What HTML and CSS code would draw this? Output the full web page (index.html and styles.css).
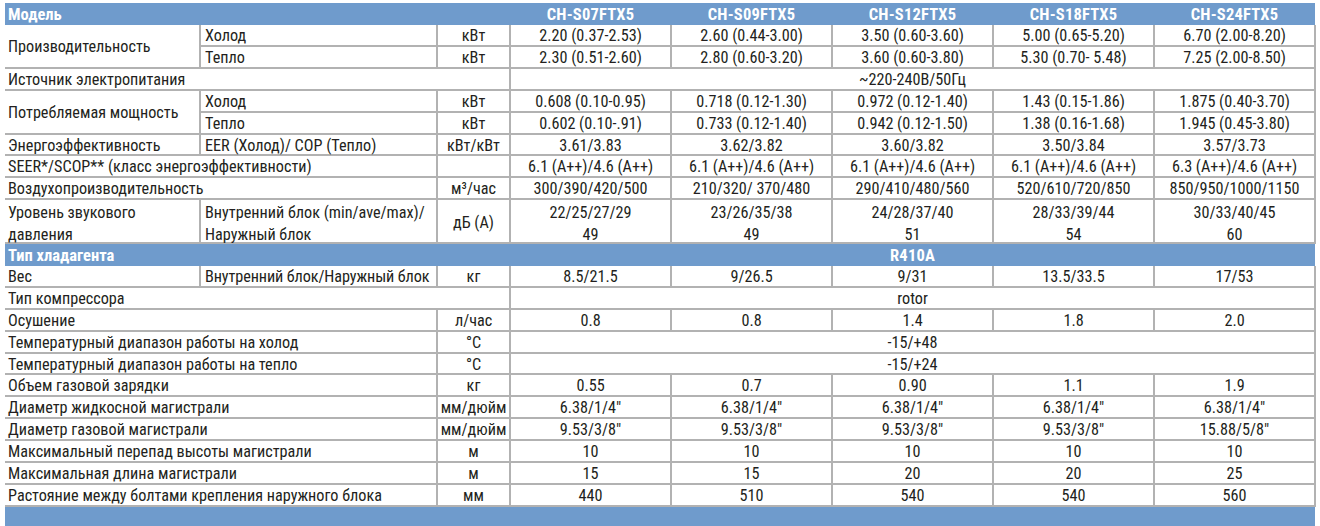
FILE: index.html
```html
<!DOCTYPE html>
<html lang="ru">
<head>
<meta charset="utf-8">
<title>Технические характеристики</title>
<link rel="stylesheet" href="styles.css">
</head>
<body>
<table class="spec">
  <colgroup>
    <col class="c-label"><col class="c-sub"><col class="c-unit">
    <col class="c-val"><col class="c-val"><col class="c-val"><col class="c-val"><col class="c-val">
  </colgroup>
  <tbody>
    <tr class="band">
      <td colspan="3" class="band-title">Модель</td>
      <td class="band-model">CH-S07FTX5</td>
      <td class="band-model">CH-S09FTX5</td>
      <td class="band-model">CH-S12FTX5</td>
      <td class="band-model">CH-S18FTX5</td>
      <td class="band-model">CH-S24FTX5</td>
    </tr>
    <tr>
      <td rowspan="2" class="lbl">Производительность</td>
      <td class="sub">Холод</td><td class="unit">кВт</td>
      <td class="v">2.20 (0.37-2.53)</td><td class="v">2.60 (0.44-3.00)</td><td class="v">3.50 (0.60-3.60)</td><td class="v">5.00 (0.65-5.20)</td><td class="v last">6.70 (2.00-8.20)</td>
    </tr>
    <tr>
      <td class="sub">Тепло</td><td class="unit">кВт</td>
      <td class="v">2.30 (0.51-2.60)</td><td class="v">2.80 (0.60-3.20)</td><td class="v">3.60 (0.60-3.80)</td><td class="v">5.30 (0.70- 5.48)</td><td class="v last">7.25 (2.00-8.50)</td>
    </tr>
    <tr>
      <td colspan="3" class="lbl">Источник электропитания</td>
      <td colspan="5" class="v last">~220-240В/50Гц</td>
    </tr>
    <tr>
      <td rowspan="2" class="lbl">Потребляемая мощность</td>
      <td class="sub">Холод</td><td class="unit">кВт</td>
      <td class="v">0.608 (0.10-0.95)</td><td class="v">0.718 (0.12-1.30)</td><td class="v">0.972 (0.12-1.40)</td><td class="v">1.43 (0.15-1.86)</td><td class="v last">1.875 (0.40-3.70)</td>
    </tr>
    <tr>
      <td class="sub">Тепло</td><td class="unit">кВт</td>
      <td class="v">0.602 (0.10-.91)</td><td class="v">0.733 (0.12-1.40)</td><td class="v">0.942 (0.12-1.50)</td><td class="v">1.38 (0.16-1.68)</td><td class="v last">1.945 (0.45-3.80)</td>
    </tr>
    <tr>
      <td class="lbl">Энергоэффективность</td>
      <td class="sub">EER (Холод)/ COP (Тепло)</td><td class="unit">кВт/кВт</td>
      <td class="v">3.61/3.83</td><td class="v">3.62/3.82</td><td class="v">3.60/3.82</td><td class="v">3.50/3.84</td><td class="v last">3.57/3.73</td>
    </tr>
    <tr>
      <td colspan="2" class="lbl">SEER*/SCOP** (класс энергоэффективности)</td>
      <td class="unit"></td>
      <td class="v">6.1 (A++)/4.6 (A++)</td><td class="v">6.1 (A++)/4.6 (A++)</td><td class="v">6.1 (A++)/4.6 (A++)</td><td class="v">6.1 (A++)/4.6 (A++)</td><td class="v last">6.3 (A++)/4.6 (A++)</td>
    </tr>
    <tr>
      <td colspan="2" class="lbl">Воздухопроизводительность</td>
      <td class="unit">м³/час</td>
      <td class="v">300/390/420/500</td><td class="v">210/320/ 370/480</td><td class="v">290/410/480/560</td><td class="v">520/610/720/850</td><td class="v last">850/950/1000/1150</td>
    </tr>
    <tr class="double">
      <td class="lbl"><div class="two">Уровень звукового<br>давления</div></td>
      <td class="sub"><div class="two">Внутренний блок (min/ave/max)/<br>Наружный блок</div></td>
      <td class="unit"><div class="two one">дБ (А)</div></td>
      <td class="v"><div class="two">22/25/27/29<br>49</div></td><td class="v"><div class="two">23/26/35/38<br>49</div></td><td class="v"><div class="two">24/28/37/40<br>51</div></td><td class="v"><div class="two">28/33/39/44<br>54</div></td><td class="v last"><div class="two">30/33/40/45<br>60</div></td>
    </tr>
    <tr class="band">
      <td colspan="3" class="band-title">Тип хладагента</td>
      <td colspan="5" class="band-model">R410A</td>
    </tr>
    <tr>
      <td class="lbl">Вес</td>
      <td class="sub tight">Внутренний блок/Наружный блок</td><td class="unit">кг</td>
      <td class="v">8.5/21.5</td><td class="v">9/26.5</td><td class="v">9/31</td><td class="v">13.5/33.5</td><td class="v last">17/53</td>
    </tr>
    <tr>
      <td colspan="3" class="lbl">Тип компрессора</td>
      <td colspan="5" class="v last">rotor</td>
    </tr>
    <tr>
      <td colspan="2" class="lbl">Осушение</td><td class="unit">л/час</td>
      <td class="v">0.8</td><td class="v">0.8</td><td class="v">1.4</td><td class="v">1.8</td><td class="v last">2.0</td>
    </tr>
    <tr>
      <td colspan="2" class="lbl">Температурный диапазон работы на холод</td><td class="unit">°C</td>
      <td colspan="5" class="v last">-15/+48</td>
    </tr>
    <tr>
      <td colspan="2" class="lbl">Температурный диапазон работы на тепло</td><td class="unit">°C</td>
      <td colspan="5" class="v last">-15/+24</td>
    </tr>
    <tr>
      <td colspan="2" class="lbl">Объем газовой зарядки</td><td class="unit">кг</td>
      <td class="v">0.55</td><td class="v">0.7</td><td class="v">0.90</td><td class="v">1.1</td><td class="v last">1.9</td>
    </tr>
    <tr>
      <td colspan="2" class="lbl">Диаметр жидкосной магистрали</td><td class="unit">мм/дюйм</td>
      <td class="v">6.38/1/4"</td><td class="v">6.38/1/4"</td><td class="v">6.38/1/4"</td><td class="v">6.38/1/4"</td><td class="v last">6.38/1/4"</td>
    </tr>
    <tr>
      <td colspan="2" class="lbl">Диаметр газовой магистрали</td><td class="unit">мм/дюйм</td>
      <td class="v">9.53/3/8"</td><td class="v">9.53/3/8"</td><td class="v">9.53/3/8"</td><td class="v">9.53/3/8"</td><td class="v last">15.88/5/8"</td>
    </tr>
    <tr>
      <td colspan="2" class="lbl">Максимальный перепад высоты магистрали</td><td class="unit">м</td>
      <td class="v">10</td><td class="v">10</td><td class="v">10</td><td class="v">10</td><td class="v last">10</td>
    </tr>
    <tr>
      <td colspan="2" class="lbl">Максимальная длина магистрали</td><td class="unit">м</td>
      <td class="v">15</td><td class="v">15</td><td class="v">20</td><td class="v">20</td><td class="v last">25</td>
    </tr>
    <tr>
      <td colspan="2" class="lbl">Растояние между болтами крепления наружного блока</td><td class="unit">мм</td>
      <td class="v">440</td><td class="v">510</td><td class="v">540</td><td class="v">540</td><td class="v last">560</td>
    </tr>
    <tr class="band foot">
      <td colspan="8"></td>
    </tr>
  </tbody>
</table>
</body>
</html>
```
FILE: styles.css
```css
html, body {
  background: #ffffff;
}
body {
  margin: 3px 0 0 5px;
  font-family: "Liberation Sans Narrow", "Roboto Condensed", "DejaVu Sans Condensed", "Liberation Sans", sans-serif;
  font-size: 16.2px;
  color: #231f20;
}
.spec {
  border-collapse: collapse;
  table-layout: fixed;
  width: 1310px;
}
.c-label { width: 195px; }
.c-sub { width: 237px; }
.c-unit { width: 73px; }
.c-val { width: 161px; }

.spec td {
  height: 16.9px;
  padding: 3px 0 0;
  line-height: 16.9px;
  white-space: nowrap;
  vertical-align: middle;
  border-bottom: 2px solid #b2b2b2;
  border-left: 2px solid #b2b2b2;
}
.spec td.lbl {
  border-left: none;
  padding-left: 3px;
  text-align: left;
}
.spec td.sub {
  padding-left: 4px;
  text-align: left;
}
.spec td.tight {
  letter-spacing: -0.1px;
}
.spec td.unit,
.spec td.v {
  text-align: center;
}
.spec td.last {
  border-right: 2px solid #b2b2b2;
}
.double td {
  height: auto;
  padding-top: 0;
  vertical-align: top;
}
.two {
  box-sizing: border-box;
  height: 41.7px;
  padding-top: 2px;
  line-height: 22px;
}
.two.one {
  padding-top: 12px;
}

.band td {
  height: 21px;
  padding-top: 1px;
  background: #6f9bcc;
  color: #ffffff;
  font-weight: bold;
  font-size: 16.5px;
  border: none;
  line-height: 21px;
}
.band td.band-title {
  padding-left: 3px;
  text-align: left;
}
.band td.band-model {
  text-align: center;
  letter-spacing: 0.2px;
}
.foot td {
  height: 21px;
}
```
